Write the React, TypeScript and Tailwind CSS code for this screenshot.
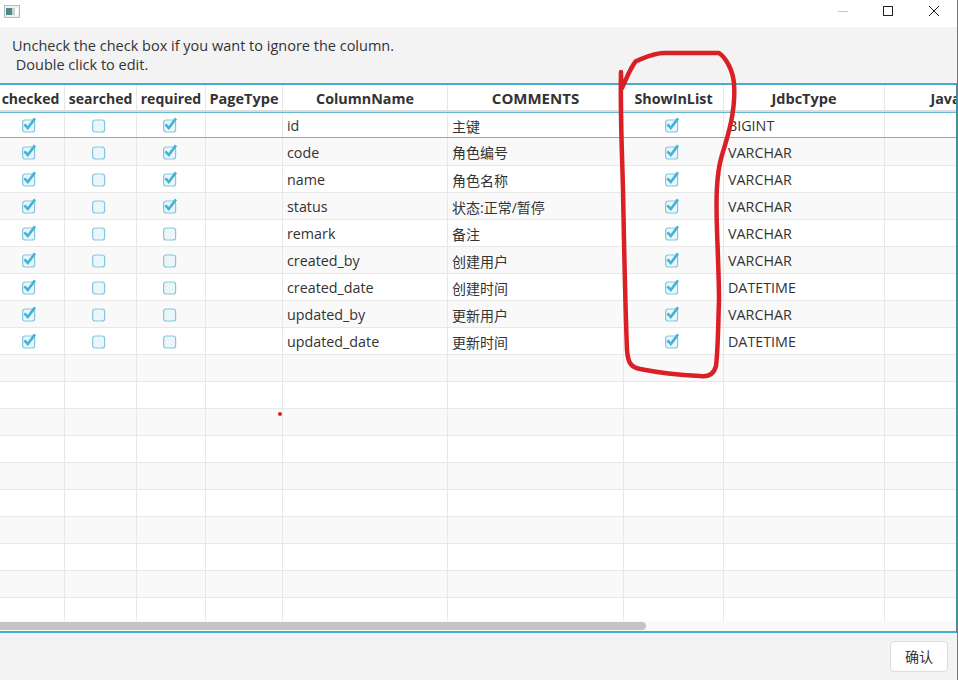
const cols = [
  { w: "w-[65px]", label: "checked", t: "text-[14px]" },
  { w: "w-[72px]", label: "searched", t: "text-[14px]" },
  { w: "w-[69px]", label: "required", t: "text-[14px]" },
  { w: "w-[77px]", label: "PageType", t: "text-[14.5px]" },
  { w: "w-[165px]", label: "ColumnName", t: "text-[14.3px]" },
  { w: "w-[176px]", label: "COMMENTS", t: "text-[15px]" },
  { w: "w-[100px]", label: "ShowInList", t: "text-[14.3px]" },
  { w: "w-[161px]", label: "JdbcType", t: "text-[14.5px]" },
  { w: "w-[156px]", label: "JavaType", t: "text-[14.3px]" },
];

const rows: [string, string, string, boolean][] = [
  ["id", "主键", "BIGINT", true],
  ["code", "角色编号", "VARCHAR", true],
  ["name", "角色名称", "VARCHAR", true],
  ["status", "状态:正常/暂停", "VARCHAR", true],
  ["remark", "备注", "VARCHAR", false],
  ["created_by", "创建用户", "VARCHAR", false],
  ["created_date", "创建时间", "DATETIME", false],
  ["updated_by", "更新用户", "VARCHAR", false],
  ["updated_date", "更新时间", "DATETIME", false],
];

function Check({ on, tight }: { on: boolean; tight?: boolean }) {
  return (
    <svg className={tight ? "-ml-[4px]" : "-ml-[2px]"} width="16" height="16" viewBox="0 0 16 16" fill="none">
      <rect x="1.6" y="3" width="12" height="12" rx="2.6" fill="#eaf6fa" stroke="#84c7de" strokeWidth="1.2" />
      {on && <path d="M3.4 7.4 L6.8 11 L14 1.4" stroke="#43b3d8" strokeWidth="2.6" />}
    </svg>
  );
}

function Cell({ w, children, center, first, nudge }: { w: string; children?: React.ReactNode; center?: boolean; first?: boolean; nudge?: boolean }) {
  return (
    <div
      className={`${w} shrink-0 h-full border-r border-[#e8e8e8] flex items-center whitespace-nowrap ${center ? "justify-center" : "pl-[4px]"} ${first ? "pr-[4px]" : ""} ${nudge ? "pt-[2px]" : ""}`}
    >
      {children}
    </div>
  );
}

function Row({ index, data }: { index: number; data?: [string, string, string, boolean] }) {
  const bg = index % 2 === 1 ? "bg-[#f9f9f9]" : "bg-white";
  const size =
    index === 0
      ? "h-[25px] border-b border-[#63bad2]"
      : index === 1
        ? "h-[28px] border-b border-[#e8e8e8]"
        : "h-[27px] border-b border-[#e8e8e8]";
  return (
    <div className={`flex shrink-0 ${bg} ${size}`}>
      <Cell w={cols[0].w} center first>{data && <Check on />}</Cell>
      <Cell w={cols[1].w} center>{data && <Check on={false} tight />}</Cell>
      <Cell w={cols[2].w} center>{data && <Check on={data[3]} />}</Cell>
      <Cell w={cols[3].w} />
      <Cell w={cols[4].w} nudge>{data && data[0]}</Cell>
      <Cell w={cols[5].w} nudge>{data && <span className="text-[14px]">{data[1]}</span>}</Cell>
      <Cell w={cols[6].w} center>{data && <Check on tight />}</Cell>
      <Cell w={cols[7].w} nudge>{data && data[2]}</Cell>
      <Cell w={cols[8].w} />
    </div>
  );
}

export default function App() {
  const blank = Array.from({ length: 10 }, (_, i) => i + 9);
  return (
    <div
      className="relative w-[958px] h-[680px] overflow-hidden bg-[#f3f3f3] text-[#333333] text-[14.3px] border-r border-[#7a7a7a]"
      style={{ fontFamily: '"Open Sans", "Noto Sans CJK SC", sans-serif' }}
    >
      <div className="h-[27px] bg-white flex items-center justify-between">
        <svg className="ml-[4px] -mt-[5px]" width="16" height="13" viewBox="0 0 16 13">
          <rect x="0.5" y="0.5" width="15" height="12" fill="#eef1f1" stroke="#b4bcbc" />
          <rect x="2" y="3" width="6" height="7" fill="#4f8a86" />
          <rect x="8" y="3" width="3" height="7" fill="#c6d3d3" />
          <rect x="11" y="3" width="3" height="7" fill="#ffffff" />
        </svg>
        <div className="flex items-center -mt-[5px]">
          <svg width="12" height="12" viewBox="0 0 12 12" className="mr-[33px]">
            <path d="M1 6.5 H11" stroke="#c8c8c8" />
          </svg>
          <svg width="12" height="12" viewBox="0 0 12 12" className="mr-[34px]">
            <rect x="1.5" y="1.5" width="9" height="9" fill="none" stroke="#222" />
          </svg>
          <svg width="12" height="12" viewBox="0 0 12 12" className="mr-[17px]">
            <path d="M1 1 L11 11 M11 1 L1 11" stroke="#222" />
          </svg>
        </div>
      </div>

      <div className="h-[56px] pl-[12px] pt-[9px] leading-[19px] text-[14.5px] text-[#333333] whitespace-pre">
        <div>Uncheck the check box if you want to ignore the column.</div>
        <div> Double click to edit.</div>
      </div>

      <div className="h-[550px] bg-[#f9f9f9] border-y-2 border-[#45adcf] border-r border-r-[#3f8ea6] overflow-hidden flex flex-col">
        <div className="w-[1041px] flex h-[27px] shrink-0 bg-white border-b-2 border-[#dcdcdc] font-bold text-[#333333]">
          {cols.map((c, i) => (
            <Cell key={c.label} w={c.w} center nudge>
              <span className={`${c.t} ${i === 0 ? "-ml-[3px]" : ""}`}>{c.label}</span>
            </Cell>
          ))}
        </div>
        <div className="w-[1041px] flex-1 min-h-0 overflow-hidden border-t border-[#63bad2] flex flex-col">
          {rows.map((r, i) => (
            <Row key={r[0]} index={i} data={r} />
          ))}
          {blank.map((i) => (
            <Row key={i} index={i} />
          ))}
        </div>
        <div className="h-[10px] shrink-0 bg-[#f9f9f9] pt-[1px]">
          <div className="w-[646px] h-[8px] rounded-r-full bg-[#c4c4c4]" />
        </div>
      </div>

      <div className="flex justify-end pt-[8px] pr-[9px]">
        <button className="w-[58px] h-[31px] bg-white border border-[#dddddd] rounded-[4px] text-[14px] text-[#333333]">确认</button>
      </div>

      <svg className="absolute left-0 top-0 pointer-events-none" width="958" height="680" fill="none">
        <path
          d="M621 72 C621 78 621 84 622 88 C626 80 630 68 636 61 C644 58 654 53 664 53 L719 53 C726 58 733 70 734 84 C736 110 728 136 722 155 C716 175 716 200 717 230 C718 260 719 280 719 300 C718 330 718 350 716 366 C714 374 708 377 700 376 C680 375 655 372 640 369 C630 367 628 362 627 350 C625 300 624 240 623 190 C622 150 620 110 621 72"
          stroke="#d92027"
          strokeWidth="4.5"
          strokeLinejoin="round"
          strokeLinecap="round"
        />
        <circle cx="280" cy="414" r="2" fill="#d92027" />
      </svg>
    </div>
  );
}
